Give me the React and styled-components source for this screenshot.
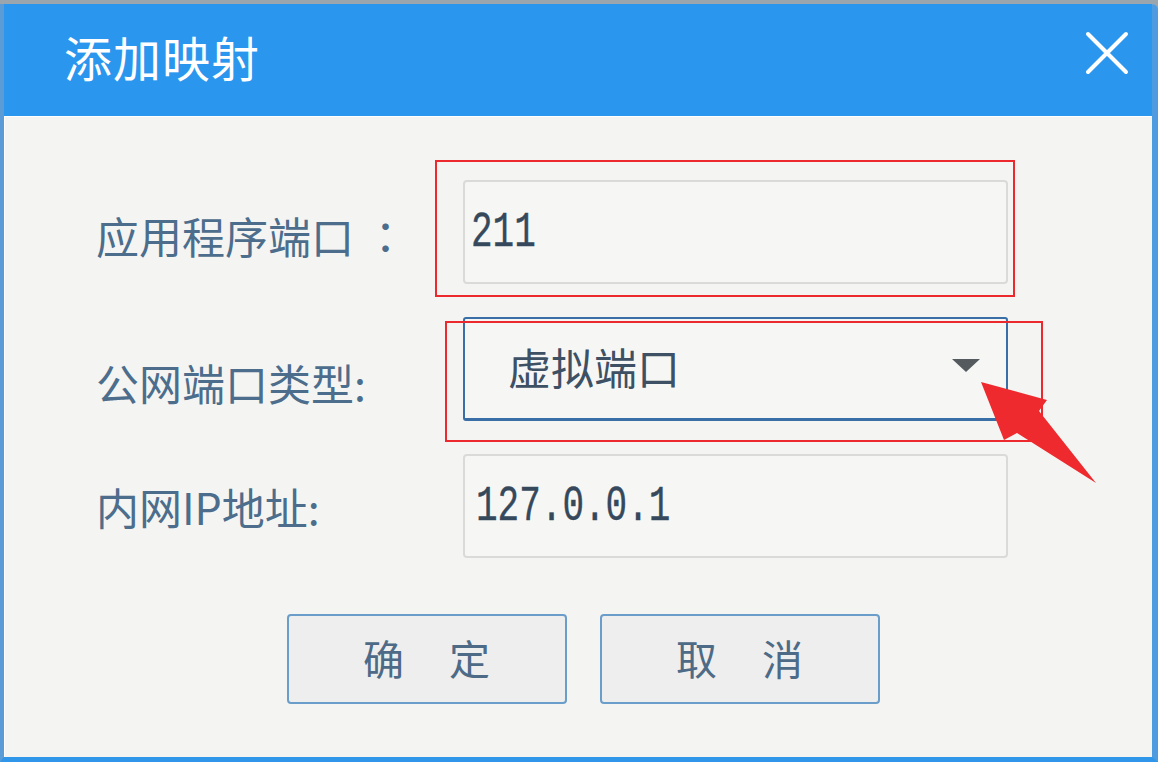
import React from "react";
import styled, { createGlobalStyle, css } from "styled-components";

const GlobalStyle = createGlobalStyle`
    html, body {
        margin: 0;
        padding: 0;
        background: #9aa5ad;
        overflow: hidden;
    }
`;

const Screen = styled.div`
    position: relative;
    width: 1158px;
    height: 762px;
    box-sizing: border-box;
    padding-top: 4px;
    background: #9aa5ad;
`;

const Dialog = styled.div`
    display: flex;
    flex-direction: column;
    height: 758px;
    box-sizing: border-box;
    background: #f4f5f2;
    border-left: 4px solid #5b9bd6;
    border-right: 6px solid #4f9be0;
    border-bottom: 5px solid #2f96ea;
    border-top-right-radius: 6px;
    overflow: hidden;
    font-family: "Noto Sans CJK SC", "Noto Sans", sans-serif;
`;

const TitleBar = styled.div`
    display: flex;
    align-items: center;
    justify-content: space-between;
    height: 112px;
    flex-shrink: 0;
    padding: 0 22px 0 60px;
    background: #2a96ee;
    border-bottom: 1px solid #ffffff;
`;

const Title = styled.span`
    color: #ffffff;
    font-size: 48px;
    letter-spacing: 1px;
    padding-bottom: 8px;
`;

const CloseButton = styled.button`
    display: flex;
    width: 46px;
    height: 46px;
    padding: 0;
    border: none;
    background: none;
    margin-bottom: 14px;
`;

const Body = styled.div`
    flex: 1;
    padding: 63px 0 0 91px;
    border-left: 1px solid #ffffff;
`;

const FormGrid = styled.div`
    display: grid;
    grid-template-columns: 367px 545px;
    grid-auto-rows: 104px;
    row-gap: 33px;
`;

const Label = styled.div`
    display: flex;
    align-items: center;
    padding-top: ${p => p.$shift}px;
    color: #4d6d8c;
    font-size: 43px;
    white-space: nowrap;
`;

const WideColon = styled.span`
    font-family: "Noto Sans CJK TC", sans-serif;
    margin-left: 10px;
`;

const FieldWrap = styled.div`
    position: relative;
    ${p => p.$mark && css`
        &::after {
            content: "";
            position: absolute;
            inset: ${p.$mark};
            border: 2px solid #ec2a2e;
            pointer-events: none;
        }
    `}
`;

const TextBox = styled.div`
    display: flex;
    align-items: center;
    height: 100%;
    box-sizing: border-box;
    padding-left: ${p => p.$indent}px;
    background: #f6f7f5;
    border: 2px solid #dadbd9;
    border-radius: 4px;
`;

const MonoText = styled.span`
    display: inline-block;
    font-family: "Liberation Mono", "DejaVu Sans Mono", monospace;
    font-size: 36px;
    color: #36495c;
    transform: scaleY(1.38);
    transform-origin: left center;
    -webkit-text-stroke: 0.3px #36495c;
`;

const SelectBox = styled.div`
    display: flex;
    align-items: center;
    justify-content: space-between;
    height: 100%;
    box-sizing: border-box;
    padding: 0 26px 6px 43px;
    background: #f6f7f5;
    border: 2px solid #3a6ea6;
    border-bottom-width: 3px;
    border-radius: 3px;
`;

const SelectText = styled.span`
    color: #3e5064;
    font-size: 43px;
`;

const Caret = styled.span`
    width: 0;
    height: 0;
    border-left: 14px solid transparent;
    border-right: 14px solid transparent;
    border-top: 13px solid #555a5f;
`;

const ButtonRow = styled.div`
    display: flex;
    justify-content: center;
    gap: 33px;
    margin-top: 56px;
    padding-left: 9px;
    margin-left: -91px;
`;

const Button = styled.button`
    width: 280px;
    height: 90px;
    box-sizing: border-box;
    background: #eeeeee;
    border: 2px solid #6b9dca;
    border-radius: 4px;
    color: #4d6a86;
    font-family: "Noto Sans CJK SC", sans-serif;
    font-size: 41px;
    word-spacing: 36px;
    padding: 0 0 4px 0;
`;

const Pointer = styled.svg`
    position: absolute;
    left: 0;
    top: 0;
    pointer-events: none;
`;

// mark = inset of the red highlight box drawn over the field
const fields = [
    { label: "应用程序端口", colon: "：", shift: 6, mark: "-20px -7px -13px -28px", kind: "text", value: "211", indent: 6 },
    { label: "公网端口类型", colon: ":", shift: 26, mark: "4px -35px -21px -18px", kind: "select", value: "虚拟端口" },
    { label: "内网IP地址", colon: ":", shift: 0, mark: null, kind: "text", value: "127.0.0.1", indent: 11 },
];

export default function App() {
    return (
        <Screen>
            <GlobalStyle />
            <Dialog>
                <TitleBar>
                    <Title>添加映射</Title>
                    <CloseButton aria-label="关闭">
                        <svg width="46" height="46" viewBox="0 0 46 46">
                            <path d="M4 4 L42 42 M42 4 L4 42" stroke="#ffffff" strokeWidth="4" strokeLinecap="round" />
                        </svg>
                    </CloseButton>
                </TitleBar>
                <Body>
                    <FormGrid>
                        {fields.map(f => (
                            <React.Fragment key={f.label}>
                                <Label $shift={f.shift}>
                                    {f.label}
                                    {f.colon === "：" ? <WideColon>{f.colon}</WideColon> : f.colon}
                                </Label>
                                <FieldWrap $mark={f.mark}>
                                    {f.kind === "select" ? (
                                        <SelectBox>
                                            <SelectText>{f.value}</SelectText>
                                            <Caret />
                                        </SelectBox>
                                    ) : (
                                        <TextBox $indent={f.indent}>
                                            <MonoText>{f.value}</MonoText>
                                        </TextBox>
                                    )}
                                </FieldWrap>
                            </React.Fragment>
                        ))}
                    </FormGrid>
                    <ButtonRow>
                        <Button>确 定</Button>
                        <Button>取 消</Button>
                    </ButtonRow>
                </Body>
            </Dialog>
            <Pointer width="1158" height="762" viewBox="0 0 1158 762">
                <polygon
                    points="981,382 1047,400 1039,411 1096,483 1017,433 1004,440"
                    fill="#ee2a2e"
                />
            </Pointer>
        </Screen>
    );
}
